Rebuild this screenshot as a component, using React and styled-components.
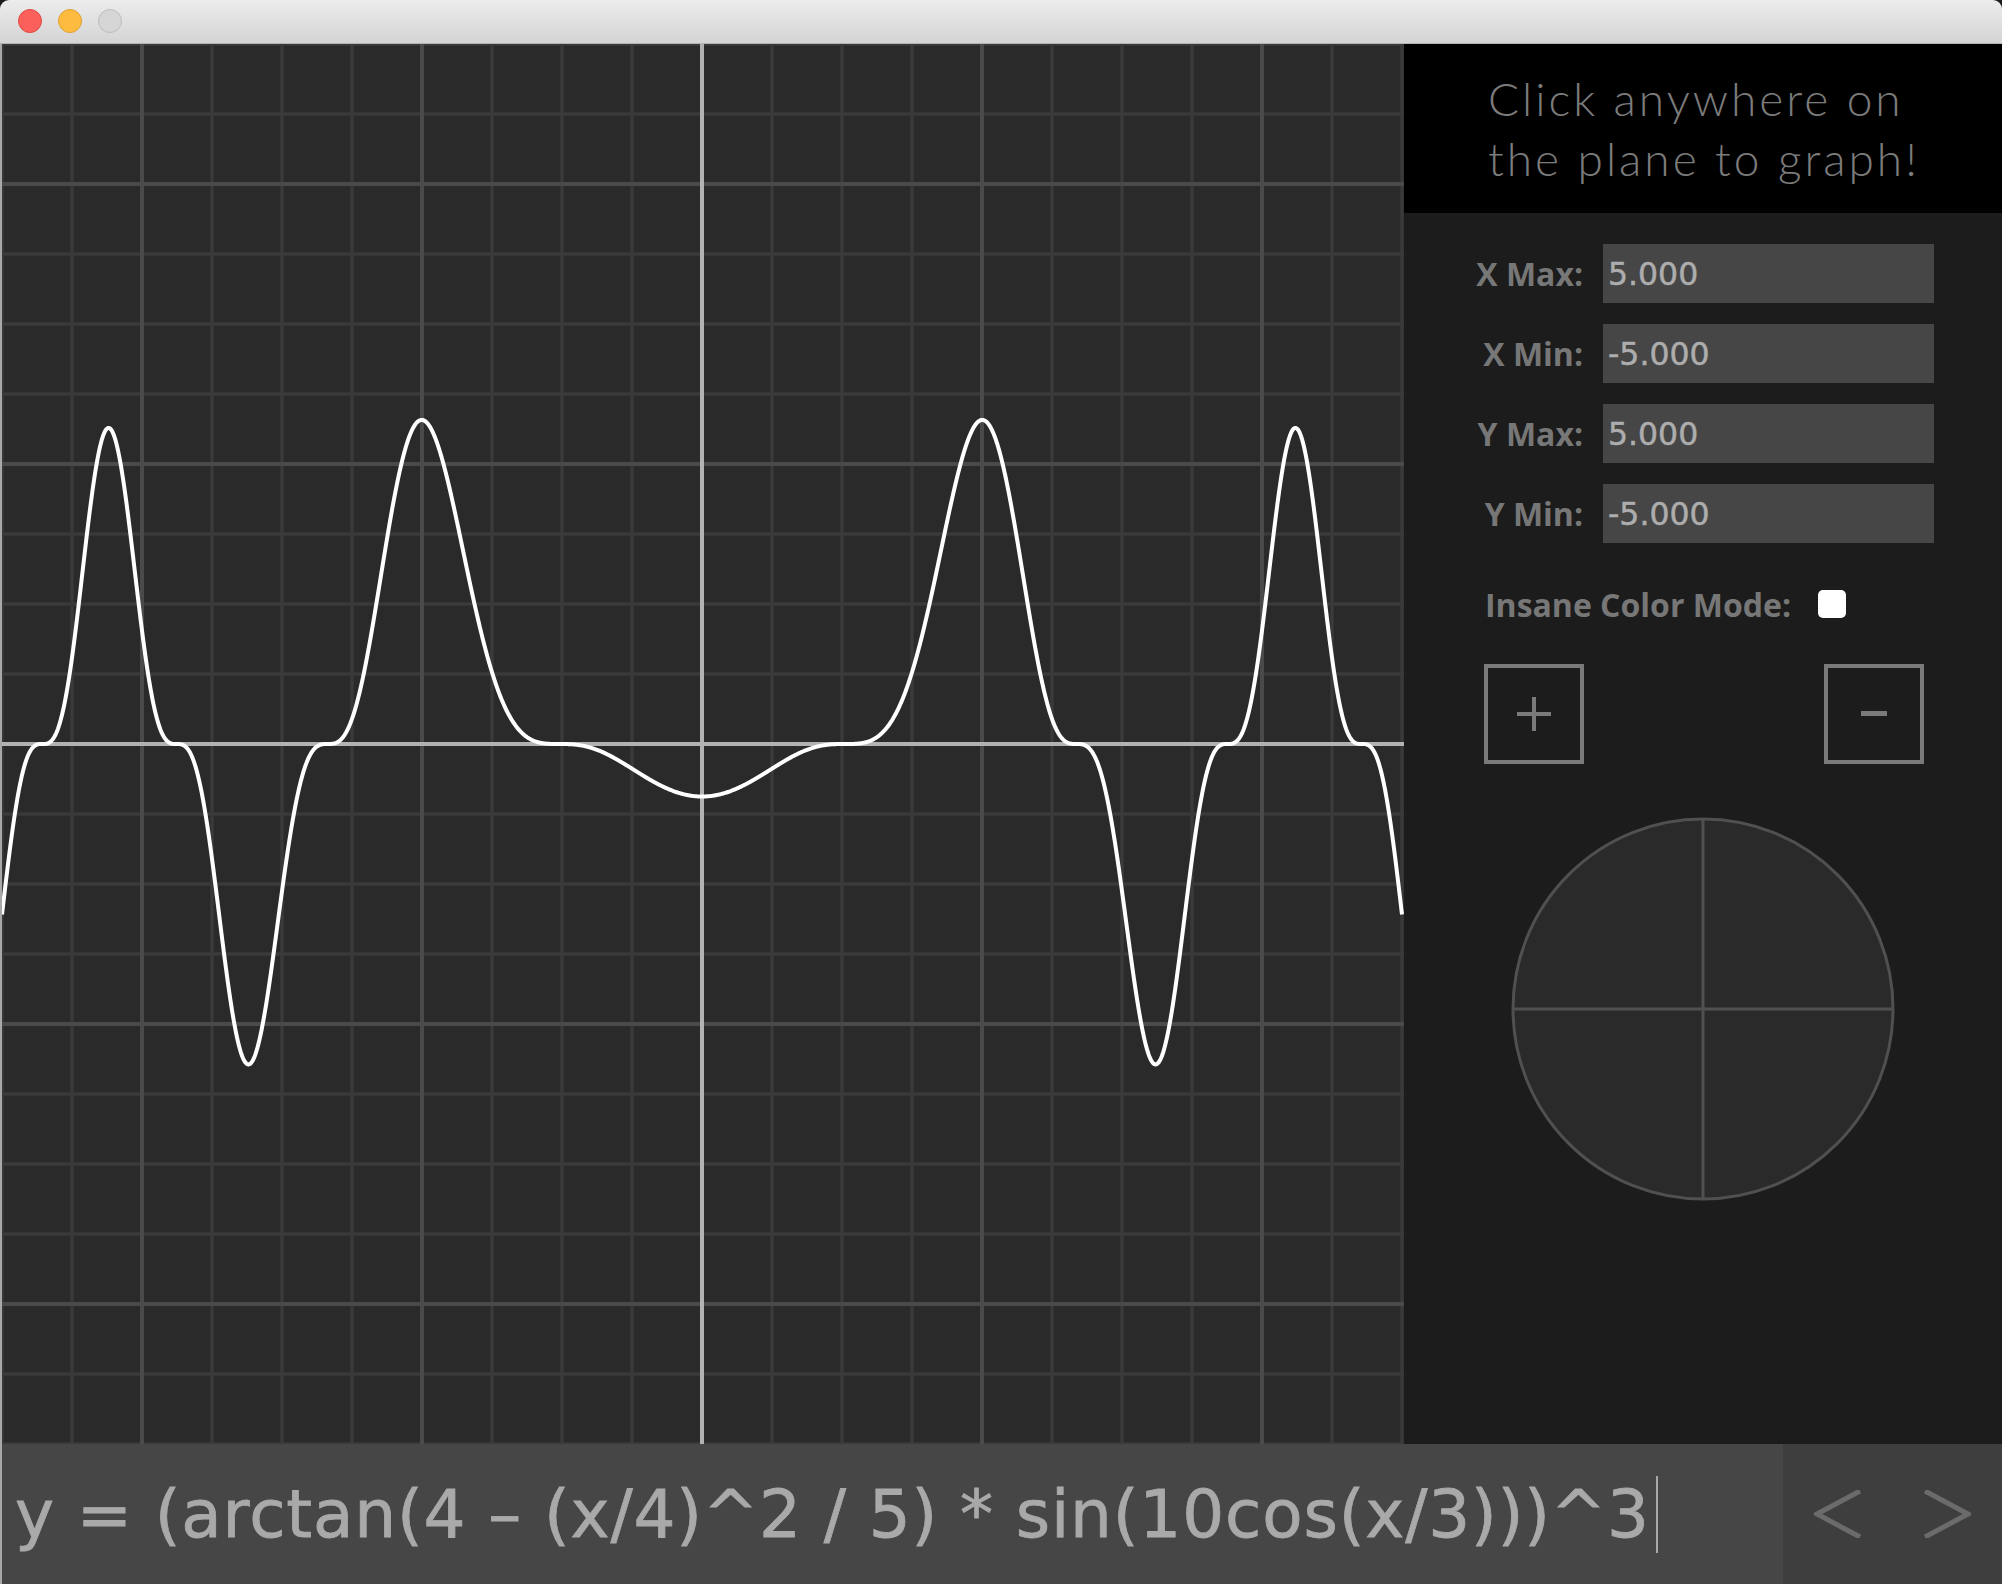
import React, { useMemo } from 'react'
import styled, { createGlobalStyle } from 'styled-components'

const GlobalStyle = createGlobalStyle`
  html, body {
    margin: 0;
    padding: 0;
    background: #ffffff;
  }
  * {
    box-sizing: border-box;
  }
`

// plane is 10 units across, 140px per unit
const UNIT = 140
const ORIGIN = 700
const SIZE = 1400

const formula = (x) => Math.pow(Math.atan(4 - (x / 4) ** 2 / 5) * Math.sin(10 * Math.cos(x / 3)), 3)

const fields = [
    { label: 'X Max:', value: '5.000' },
    { label: 'X Min:', value: '-5.000' },
    { label: 'Y Max:', value: '5.000' },
    { label: 'Y Min:', value: '-5.000' },
]

function Plane() {
    const curve = useMemo(() => {
        const pts = []
        for (let i = 0; i <= 2000; i++) {
            const x = -5 + i * 0.005
            const px = ORIGIN + x * UNIT
            const py = ORIGIN - formula(x) * UNIT
            pts.push(`${i === 0 ? 'M' : 'L'}${px.toFixed(2)} ${py.toFixed(2)}`)
        }
        return pts.join(' ')
    }, [])

    const lines = []
    for (let k = 0; k <= 20; k++) {
        const v = k * 70
        const kind = k === 10 ? 'axis' : (k - 10) % 4 === 0 ? 'major' : 'minor'
        lines.push({ v, kind })
    }
    const order = ['minor', 'major', 'axis']
    const style = {
        minor: { stroke: '#3a3a3a', width: 3.5 },
        major: { stroke: '#4a4a4a', width: 4 },
        axis: { stroke: '#b2b2b2', width: 4 },
    }

    return (
        <Canvas viewBox="0 0 1402 1400" width="1402" height="1400">
            <rect x="0" y="0" width="1402" height="1400" fill="#2a2a2a" />
            {order.map((kind) =>
                lines.filter((l) => l.kind === kind).map((l) => (
                    <g key={kind + l.v}>
                        <line x1={l.v} y1="0" x2={l.v} y2={SIZE} stroke={style[kind].stroke} strokeWidth={style[kind].width} />
                        <line x1="0" y1={l.v} x2="1402" y2={l.v} stroke={style[kind].stroke} strokeWidth={style[kind].width} />
                    </g>
                ))
            )}
            <path d={curve} fill="none" stroke="#ffffff" strokeWidth="4" strokeLinejoin="round" />
        </Canvas>
    )
}

export default function App() {
    return (
        <>
            <GlobalStyle />
            <Window>
                <TitleBar>
                    <Light $color="#fc605b" $edge="#de4a44" />
                    <Light $color="#fdbc40" $edge="#dea236" />
                    <Light $color="#d6d6d6" $edge="#bdbdbd" />
                </TitleBar>

                <Main>
                    <Plane />

                    <SidePanel>
                        <Banner>
                            Click anywhere on<br />
                            the plane to graph!
                        </Banner>

                        <Fields>
                            {fields.map((field) => (
                                <FieldRow key={field.label}>
                                    <FieldLabel>{field.label}</FieldLabel>
                                    <FieldInput defaultValue={field.value} />
                                </FieldRow>
                            ))}
                        </Fields>

                        <ToggleRow>
                            <FieldLabel>Insane Color Mode:</FieldLabel>
                            <Check />
                        </ToggleRow>

                        <ZoomRow>
                            <ZoomButton aria-label="zoom in">
                                <svg width="34" height="34" viewBox="0 0 34 34">
                                    <rect x="15" y="0" width="4" height="34" fill="#7a7a7a" />
                                    <rect x="0" y="15" width="34" height="4" fill="#7a7a7a" />
                                </svg>
                            </ZoomButton>
                            <ZoomButton aria-label="zoom out">
                                <svg width="26" height="6" viewBox="0 0 26 6">
                                    <rect x="0" y="0" width="26" height="5" fill="#7a7a7a" />
                                </svg>
                            </ZoomButton>
                        </ZoomRow>

                        <Pad>
                            <svg width="384" height="384" viewBox="0 0 384 384">
                                <circle cx="192" cy="192" r="190" fill="#2a2a2a" stroke="#505050" strokeWidth="3" />
                                <line x1="192" y1="2" x2="192" y2="382" stroke="#505050" strokeWidth="3" />
                                <line x1="2" y1="192" x2="382" y2="192" stroke="#505050" strokeWidth="3" />
                            </svg>
                        </Pad>
                    </SidePanel>
                </Main>

                <BottomBar>
                    <FormulaField>
                        y = (arctan(4 – (x/4)^2 / 5) * sin(10cos(x/3)))^3
                        <Caret />
                    </FormulaField>
                    <NavGroup>
                        <NavButton aria-label="previous">
                            <svg width="48" height="48" viewBox="0 0 48 48">
                                <polyline points="46,1 3,24 46,47" fill="none" stroke="#6b6b6b" strokeWidth="5" />
                            </svg>
                        </NavButton>
                        <NavButton aria-label="next">
                            <svg width="48" height="48" viewBox="0 0 48 48">
                                <polyline points="2,1 45,24 2,47" fill="none" stroke="#6b6b6b" strokeWidth="5" />
                            </svg>
                        </NavButton>
                    </NavGroup>
                </BottomBar>
            </Window>
        </>
    )
}

const Window = styled.div`
    width: 2002px;
    height: 1584px;
    display: flex;
    flex-direction: column;
    overflow: hidden;
    background: #1c1c1c;
`

const TitleBar = styled.div`
    height: 44px;
    flex-shrink: 0;
    display: flex;
    align-items: center;
    gap: 16px;
    padding: 0 0 1px 18px;
    background: linear-gradient(#ececec, #d4d4d4);
    border-bottom: 1px solid #b3b3b3;
    border-radius: 9px 9px 0 0;
`

const Light = styled.span`
    width: 24px;
    height: 24px;
    border-radius: 50%;
    background: ${({ $color }) => $color};
    border: 1px solid ${({ $edge }) => $edge};
`

const Main = styled.div`
    display: flex;
    height: 1400px;
    border-left: 2px solid #a8a8a8;
`

const Canvas = styled.svg`
    display: block;
    flex-shrink: 0;
`

const SidePanel = styled.div`
    flex: 1;
    display: flex;
    flex-direction: column;
    background: #1c1c1c;
`

const Banner = styled.div`
    height: 169px;
    background: #000000;
    padding: 25px 0 0 84px;
    font-family: Lato, "Open Sans", sans-serif;
    font-weight: 300;
    font-size: 46px;
    line-height: 60px;
    letter-spacing: 3px;
    color: #7b7b7b;
    white-space: nowrap;
`

const Fields = styled.div`
    display: flex;
    flex-direction: column;
    gap: 21px;
    padding-top: 31px;
`

const FieldRow = styled.div`
    display: grid;
    grid-template-columns: 179px 331px;
    column-gap: 20px;
    align-items: center;
    height: 59px;
`

const FieldLabel = styled.label`
    text-align: right;
    font-family: "Open Sans", "DejaVu Sans", sans-serif;
    font-weight: 700;
    font-size: 32px;
    color: #777777;
    white-space: nowrap;
`

const FieldInput = styled.input`
    height: 59px;
    width: 331px;
    border: none;
    outline: none;
    background: #464646;
    padding: 0 0 0 5px;
    font-family: "DejaVu Sans", sans-serif;
    font-size: 31.5px;
    color: #adadad;
    -webkit-text-stroke: 0.5px #adadad;
`

const ToggleRow = styled.div`
    display: flex;
    align-items: center;
    height: 28px;
    margin-top: 47px;
    padding-left: 81px;
`

const Check = styled.span`
    width: 28px;
    height: 28px;
    margin-left: 27px;
    border-radius: 5px;
    background: #ffffff;
`

const ZoomRow = styled.div`
    display: flex;
    justify-content: space-between;
    margin-top: 46px;
    padding: 0 78px 0 80px;
`

const ZoomButton = styled.button`
    width: 100px;
    height: 100px;
    padding: 0;
    display: flex;
    align-items: center;
    justify-content: center;
    background: transparent;
    border: 4px solid #7a7a7a;
    cursor: pointer;
`

const Pad = styled.div`
    display: flex;
    justify-content: center;
    margin-top: 53px;
`

const BottomBar = styled.div`
    display: flex;
    height: 140px;
    flex-shrink: 0;
    border-left: 2px solid #a8a8a8;
`

const FormulaField = styled.div`
    flex: 1;
    display: flex;
    align-items: center;
    padding-left: 13px;
    background: #464646;
    font-family: "DejaVu Sans", sans-serif;
    font-size: 66px;
    letter-spacing: 0.85px;
    color: #a9a9a9;
    -webkit-text-stroke: 0.8px #a9a9a9;
    white-space: pre;
`

const Caret = styled.span`
    display: inline-block;
    width: 2px;
    height: 77px;
    margin-left: 6px;
    background: #a9a9a9;
    -webkit-text-stroke: 0;
`

const NavGroup = styled.div`
    width: 219px;
    display: flex;
    background: #3e3e3e;
`

const NavButton = styled.button`
    flex: 1;
    display: flex;
    align-items: center;
    justify-content: center;
    background: transparent;
    border: none;
    padding: 0;
    cursor: pointer;
`
